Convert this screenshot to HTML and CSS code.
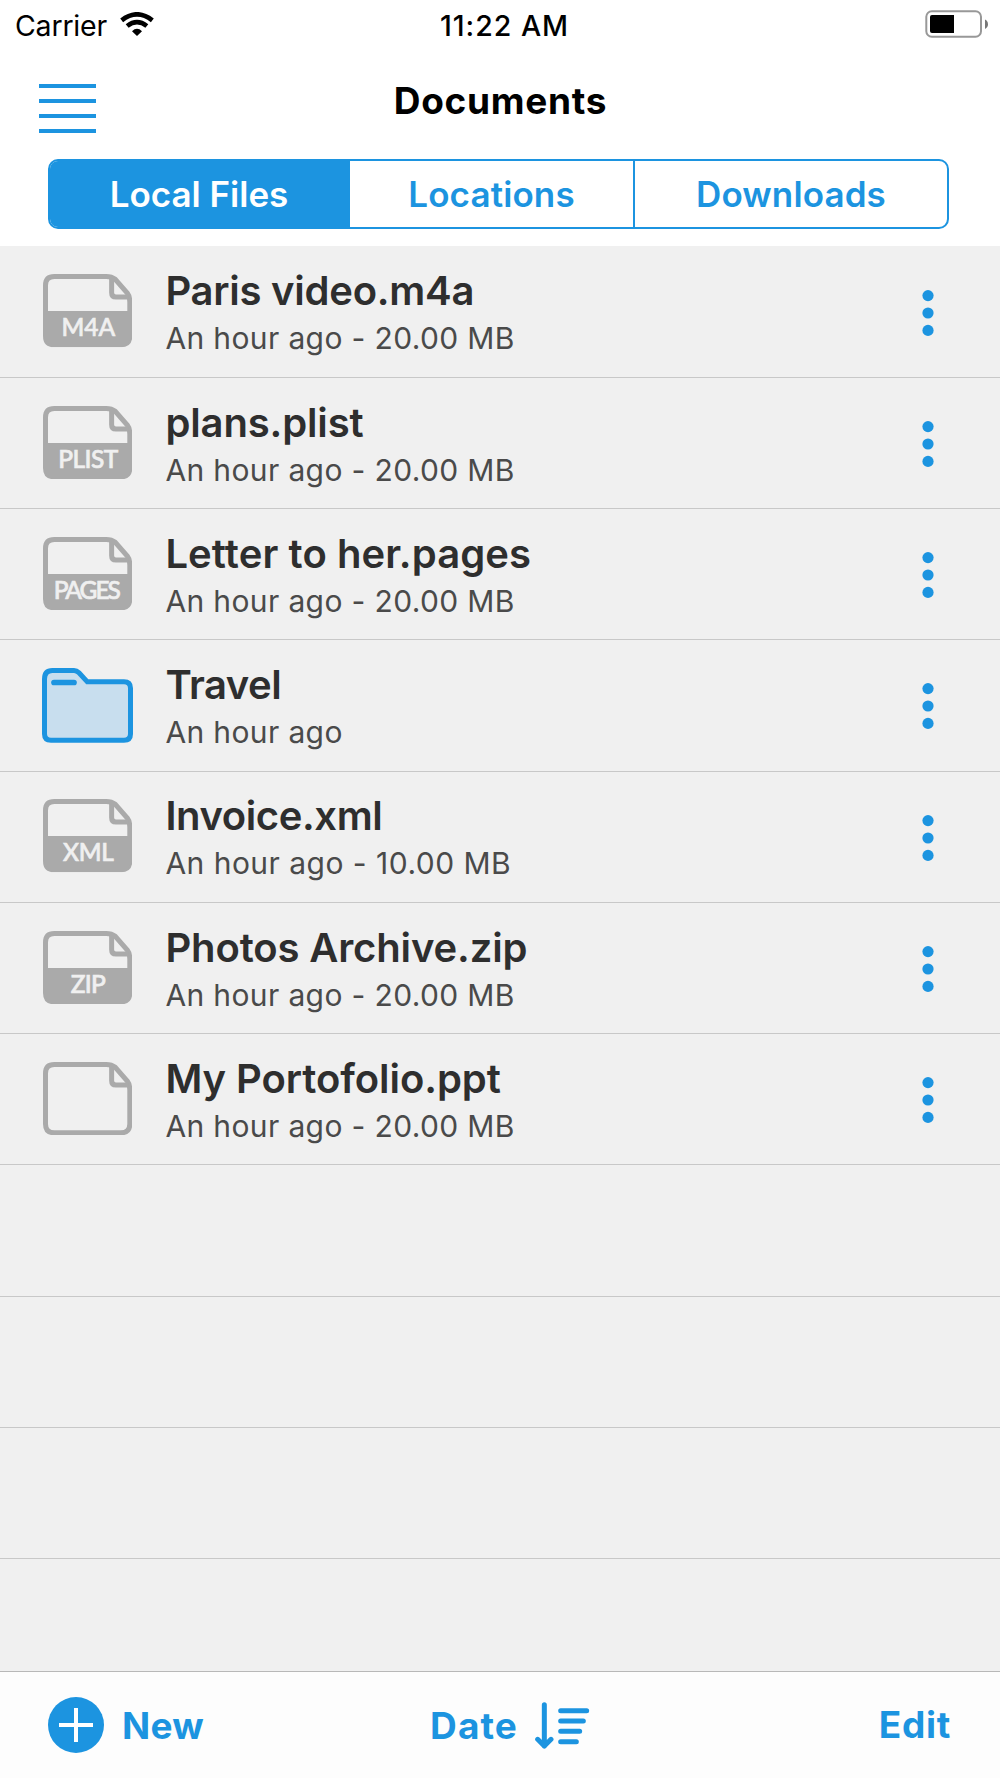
FILE: index.html
```
<!DOCTYPE html>
<html lang="en">
<head>
<meta charset="utf-8">
<title>Documents</title>
<link rel="stylesheet" href="styles.css">
</head>
<body>
<svg class="defs" aria-hidden="true">
  <symbol id="file" viewBox="0 0 268 220">
    <path class="outline" d="M34 7.500H190Q206 7.500 217 16L253 57Q260.500 67 260.500 84V186Q260.500 212.500 234 212.500H34Q7.500 212.500 7.500 186V34Q7.500 7.500 34 7.500Z"/>
    <path class="outline" d="M206 12V56Q206 69 219 69H256"/>
  </symbol>
  <symbol id="band" viewBox="0 0 268 220">
    <path d="M5 111H263V186Q263 216 234 216H34Q5 216 5 186Z" fill="#aaa"/>
  </symbol>
  <symbol id="dots" viewBox="0 0 12 48">
    <circle cx="6" cy="6.600" r="5.600"/><circle cx="6" cy="24" r="5.600"/><circle cx="6" cy="41.400" r="5.600"/>
  </symbol>
</svg>
<div class="screen">
  <header class="header">
    <div class="status">
      <div class="carrier">Carrier
        <svg class="wifi" viewBox="0 0 102 72"><path d="M5 25Q51 -11 97 25" /><path d="M21.500 42Q51 18.500 80.500 42"/><path class="wedge" d="M36 57.500Q51 43 66 57.500L51 72Z"/></svg>
      </div>
      <div class="clock">11:22 AM</div>
      <svg class="battery" viewBox="0 0 64 29"><rect x="1.300" y="1.300" width="54.700" height="25.400" rx="5.500"/><path class="level" d="M7 5H29V23H7Q5 23 5 21V7Q5 5 7 5Z"/><path class="nub" d="M60 9.500Q63 11 63 14.300Q63 17.500 60 19Z"/></svg>
    </div>
    <nav class="titlebar">
      <svg class="menu" viewBox="0 0 57 49"><path d="M0 2H57M0 17H57M0 32H57M0 47H57"/></svg>
      <h1 class="title">Documents</h1>
    </nav>
    <div class="segments">
      <div class="segment active">Local Files</div>
      <div class="segment">Locations</div>
      <div class="segment">Downloads</div>
    </div>
  </header>
  <main class="list">
    <div class="row">
      <svg class="icon" viewBox="0 0 268 220"><use href="#file"/><use href="#band"/><text class="m4a" x="136" y="187">M4A</text></svg>
      <div class="info"><div class="name n-m4a">Paris video.m4a</div><div class="meta">An hour ago - 20.00 MB</div></div>
      <svg class="more"><use href="#dots"/></svg>
    </div>
    <div class="row">
      <svg class="icon" viewBox="0 0 268 220"><use href="#file"/><use href="#band"/><text class="plist" x="135" y="187">PLIST</text></svg>
      <div class="info"><div class="name">plans.plist</div><div class="meta">An hour ago - 20.00 MB</div></div>
      <svg class="more"><use href="#dots"/></svg>
    </div>
    <div class="row">
      <svg class="icon" viewBox="0 0 268 220"><use href="#file"/><use href="#band"/><text class="pages" x="130" y="187">PAGES</text></svg>
      <div class="info"><div class="name n-pages">Letter to her.pages</div><div class="meta">An hour ago - 20.00 MB</div></div>
      <svg class="more"><use href="#dots"/></svg>
    </div>
    <div class="row">
      <svg class="icon folder" viewBox="0 0 273 224"><path d="M7.500 33Q7.500 7.500 31 7.500H96Q104 7.500 111 14.500L136 41.500H246Q265.500 41.500 265.500 61V198Q265.500 216.500 246 216.500H27Q7.500 216.500 7.500 198Z"/><path class="tab" d="M36 43.500H96"/></svg>
      <div class="info"><div class="name n-travel">Travel</div><div class="meta">An hour ago</div></div>
      <svg class="more"><use href="#dots"/></svg>
    </div>
    <div class="row">
      <svg class="icon" viewBox="0 0 268 220"><use href="#file"/><use href="#band"/><text class="xml" x="136" y="187">XML</text></svg>
      <div class="info"><div class="name n-xml">Invoice.xml</div><div class="meta m-short">An hour ago - 10.00 MB</div></div>
      <svg class="more"><use href="#dots"/></svg>
    </div>
    <div class="row">
      <svg class="icon" viewBox="0 0 268 220"><use href="#file"/><use href="#band"/><text class="zip" x="135" y="187">ZIP</text></svg>
      <div class="info"><div class="name">Photos Archive.zip</div><div class="meta">An hour ago - 20.00 MB</div></div>
      <svg class="more"><use href="#dots"/></svg>
    </div>
    <div class="row">
      <svg class="icon" viewBox="0 0 268 220"><use href="#file"/></svg>
      <div class="info"><div class="name n-ppt">My Portofolio.ppt</div><div class="meta">An hour ago - 20.00 MB</div></div>
      <svg class="more"><use href="#dots"/></svg>
    </div>
    <div class="row"></div>
    <div class="row"></div>
    <div class="row"></div>
    <div class="row"></div>
  </main>
  <footer class="toolbar">
    <div class="action new"><svg class="plus" viewBox="0 0 56 56"><circle cx="28" cy="28" r="28"/><path d="M28 11V45M11 28H45"/></svg>New</div>
    <div class="action date">Date<svg class="sort" viewBox="0 0 165 141"><path d="M28 8V132M8 112L28 132L48 112"/><path d="M77 26H155M77 57H145M77 88H134M77 119H124"/></svg></div>
    <div class="action edit">Edit</div>
  </footer>
</div>
</body>
</html>
```
FILE: styles.css
```
* { box-sizing: border-box; }
body { margin: 0; font-family: Inter, "Liberation Sans", sans-serif; color: #000; background: #fff; }
.defs { display: none; }
.screen { width: 1000px; height: 1778px; display: flex; flex-direction: column; }

.header { height: 246px; flex: none; }
.status { height: 50px; line-height: 52px; font-size: 28.5px; display: grid; grid-template-columns: 1fr auto 1fr; padding: 0 11px 0 15px; }
.carrier { display: flex; letter-spacing: -0.2px; }
.wifi { width: 34px; height: 24px; margin: 12px 0 0 13px; fill: none; stroke: #000; stroke-width: 14; }
.wifi .wedge { fill: #000; stroke: none; }
.clock { font-weight: 500; letter-spacing: 1px; padding-left: 5px; }
.battery { width: 64px; height: 29px; margin-top: 10px; justify-self: end; fill: none; stroke: #989898; stroke-width: 2; }
.battery .level { fill: #000; stroke: none; }
.battery .nub { fill: #777; stroke: none; }

.titlebar { height: 109px; display: grid; grid-template-columns: 1fr auto 1fr; }
.menu { width: 57px; height: 49px; margin: 34px 0 0 39px; stroke: #1c94e0; stroke-width: 4; }
.title { margin: 0; font-size: 37px; line-height: 102px; font-weight: 700; letter-spacing: 0.7px; padding-left: 1px; }
.segments { height: 70px; margin: 0 51px 0 48px; display: grid; grid-template-columns: 300px 283px 1fr; border: 2px solid #1c94e0; border-radius: 10px; overflow: hidden; }
.segment { font-size: 35px; font-weight: 600; line-height: 66px; letter-spacing: 0.12px; text-align: center; color: #1c94e0; }
.segment + .segment + .segment { border-left: 2px solid #1c94e0; }
.segment.active { background: #1c94e0; color: #fff; letter-spacing: 0; padding-right: 2px; }

.list { flex: 1; min-height: 0; overflow: hidden; background: #f0f0f0; padding-top: 0.7px; }
.row { height: 131.25px; display: flex; align-items: flex-start; border-bottom: 1px solid #c8c8c8; padding-left: 42.7px; }
.icon { width: 89.300px; height: 73.300px; margin-top: 27.700px; flex: none; }
.outline { fill: none; stroke: #aaa; stroke-width: 15; }
.icon text { font: 500 73.500px Lato, sans-serif; fill: #f0f0f0; stroke: #f0f0f0; stroke-width: 2; text-anchor: middle; }
.icon .m4a { letter-spacing: 0; }
.icon .plist { letter-spacing: -1.5px; }
.icon .pages { letter-spacing: -6px; }
.icon .xml { letter-spacing: -1px; }
.icon .zip { letter-spacing: -2px; }
.folder { width: 91px; height: 74.700px; margin-right: -0.700px; margin-left: -1px; fill: #c8deee; stroke: #1c94e0; stroke-width: 15; }
.folder .tab { stroke-width: 17; stroke-linecap: round; }
.info { flex: 1; padding: 20.700px 0 0 33.400px; }
.name { font-size: 40px; line-height: 48px; font-weight: 600; letter-spacing: -0.13px; color: #2e2e2e; }
.n-m4a { letter-spacing: -0.25px; }
.n-pages { letter-spacing: 0.1px; }
.n-travel { letter-spacing: -0.5px; }
.n-xml { letter-spacing: -0.4px; }
.n-ppt { letter-spacing: -0.06px; }
.meta { font-size: 30px; line-height: 47px; letter-spacing: 0.37px; color: #4a4a4a; }
.m-short { letter-spacing: 0.48px; }
.more { width: 12px; height: 48px; margin: 42px 66px 0 0; fill: #1c94e0; flex: none; }

.toolbar { height: 107px; flex: none; border-top: 1px solid #b8b8b8; background: #fdfdfd; display: grid; grid-template-columns: 1fr auto 1fr; align-items: center; padding: 0 49px 0 48px; color: #1c94e0; font-size: 37px; font-weight: 700; }
.action { display: flex; align-items: center; }
.new { letter-spacing: 0.3px; }
.plus { width: 56px; height: 56px; margin-right: 18px; fill: #1c94e0; stroke: #fff; stroke-width: 4; }
.plus circle { stroke: none; }
.date { letter-spacing: 1.1px; padding-left: 21px; }
.sort { width: 55px; height: 47px; margin-left: 17px; fill: none; stroke: #1c94e0; stroke-width: 15; stroke-linecap: round; stroke-linejoin: round; }
.edit { justify-self: end; letter-spacing: 0.7px; margin-bottom: 1px; }
```
